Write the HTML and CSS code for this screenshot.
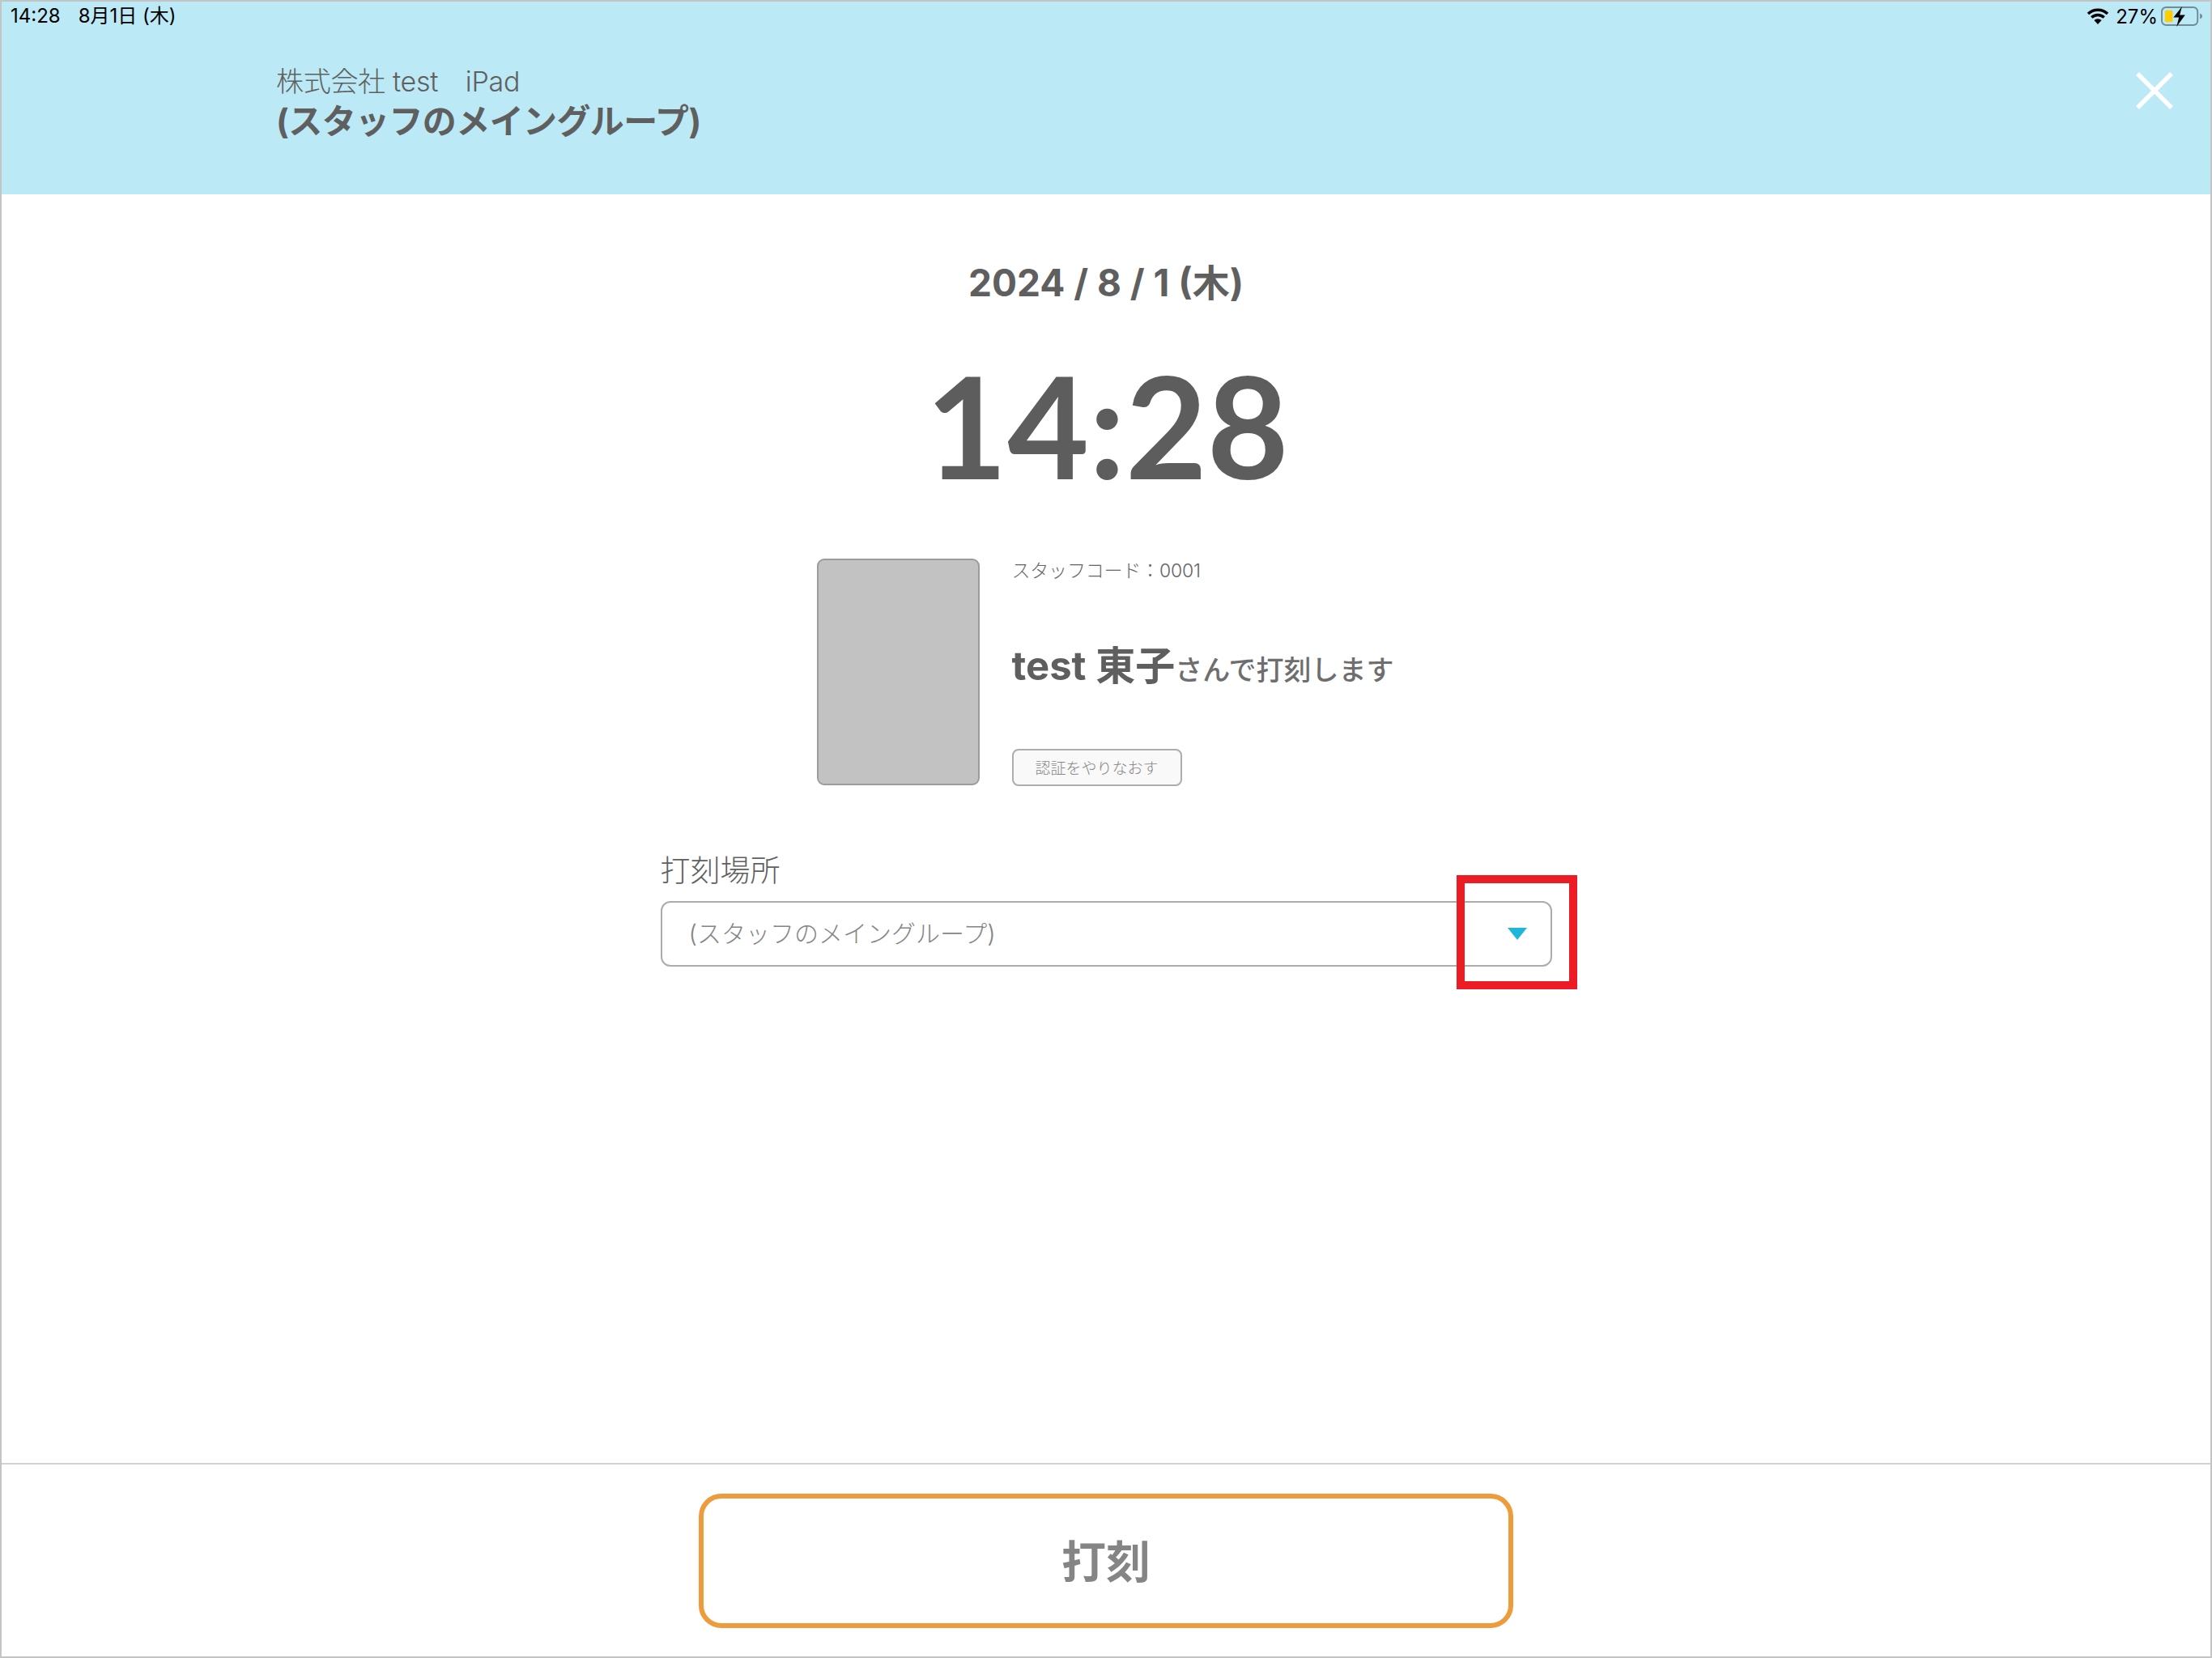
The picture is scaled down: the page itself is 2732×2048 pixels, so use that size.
FILE: index.html
```html
<!DOCTYPE html>
<html lang="ja">
<head>
<meta charset="utf-8">
<title>打刻</title>
<link rel="stylesheet" href="styles.css">
</head>
<body>
<div class="frame">
  <header class="header">
    <div class="status">
      <div class="status-left"><span>14:28</span><span>8月1日 (木)</span></div>
      <div class="status-right">
        <svg class="wifi" viewBox="0 0 28 20"><path d="M14 20l-4.600-5a6.600 6.600 0 0 1 9.200 0z"/><path d="M7.500 12.800l-2.400-2.500a13 13 0 0 1 17.800 0l-2.400 2.500a9.600 9.600 0 0 0-13 0z"/><path d="M3.200 8.300L.8 5.800a19.200 19.200 0 0 1 26.400 0l-2.400 2.500a15.800 15.800 0 0 0-21.600 0z"/></svg>
        <span class="pct">27%</span>
        <svg class="battery" viewBox="0 0 54 26"><rect x="1" y="1" width="46" height="23" rx="5.500" fill="none" stroke="#6f8c98" stroke-width="2"/><rect x="5" y="5" width="10" height="15" rx="2" fill="#fc0"/><path d="M50 9c2 .5 3 2 3 3.500s-1 3-3 3.500z" fill="#6f8c98"/><path d="M27 0L16 14h7l-3 12 11-15h-7z" fill="#000"/></svg>
      </div>
    </div>
    <div class="header-body">
      <div class="company">株式会社 test　iPad</div>
      <div class="group">(スタッフのメイングループ)</div>
    </div>
    <svg class="close" viewBox="0 0 46 46"><path d="M2 2l42 42M44 2L2 44" stroke="#fff" stroke-width="5.500" fill="none"/></svg>
  </header>
  <main class="main">
    <div class="date">2024 / 8 / 1 (木)</div>
    <div class="time">14:28</div>
    <section class="staff">
      <div class="photo"></div>
      <div class="staff-info">
        <div class="code">スタッフコード：0001</div>
        <div class="name"><strong>test 東子</strong><span>さんで打刻します</span></div>
        <button class="retry">認証をやりなおす</button>
      </div>
    </section>
    <section class="place">
      <div class="place-label">打刻場所</div>
      <div class="select">
        <span>(スタッフのメイングループ)</span>
        <i class="caret"></i>
        <div class="callout"></div>
      </div>
    </section>
  </main>
  <footer class="footer">
    <button class="stamp">打刻</button>
  </footer>
</div>
</body>
</html>
```

FILE: styles.css
```css
* { box-sizing: border-box; }
html, body { margin: 0; padding: 0; background: #fff; }
body { font-family: "Inter", "Noto Sans CJK JP", sans-serif; color: #5f5f5f; }
.frame {
  position: relative;
  width: 2732px;
  height: 2048px;
  border: 2px solid #c4c4c4;
  display: flex;
  flex-direction: column;
}
.header {
  position: relative;
  height: 238px;
  flex: none;
  background: #bbe9f5;
}
.status {
  height: 36px;
  padding: 0 9px 0 11px;
  display: flex;
  justify-content: space-between;
  align-items: center;
  color: #000;
  font-size: 24px;
}
.status-left { display: flex; align-items: baseline; gap: 22px; line-height: 36px; }
.status-right { display: flex; align-items: center; }
.wifi { width: 28px; height: 20px; margin-right: 8px; }
.pct { margin-right: 4px; font-size: 24px; }
.battery { width: 52px; height: 25px; }
.header-body { padding: 43px 0 0 339px; }
.company { font-size: 34px; line-height: 40px; font-weight: 300; letter-spacing: -0.3px; color: #606060; }
.group { margin-top: 4px; font-size: 42px; line-height: 50px; font-weight: 700; color: #5f5f5f; letter-spacing: -.6px; }
.close { position: absolute; right: 46px; top: 87px; width: 46px; height: 46px; }
.main {
  flex: 1;
  display: flex;
  flex-direction: column;
  align-items: center;
  padding-top: 79px;
}
.date { font-size: 46px; line-height: 60px; font-weight: 700; color: #5f5f5f; }
.time {
  margin-top: 46px;
  margin-left: 3px;
  font-family: "Lato", sans-serif;
  font-size: 174px;
  line-height: 200px;
  font-weight: 700;
  color: #5d5d5d;
}
.staff { margin-top: 65px; margin-left: -2px; height: 281px; display: flex; gap: 40px; }
.photo {
  width: 201px;
  height: 280px;
  background: #c2c2c2;
  border: 2px solid #9c9c9c;
  border-radius: 9px;
}
.staff-info { display: flex; flex-direction: column; align-items: flex-start; }
.code { height: 29px; padding-top: 1px; font-size: 23px; line-height: 28px; font-weight: 300; color: #666; letter-spacing: -0.2px; }
.name { flex: none; margin-top: 74px; height: 60px; line-height: 60px; white-space: nowrap; }
.name strong { font-size: 49px; font-weight: 700; color: #5f5f5f; }
.name span { font-size: 34px; font-weight: 500; color: #6e6e6e; }
.retry {
  flex: none;
  margin-top: 72px;
  width: 210px;
  height: 46px;
  padding: 0 0 2px;
  background: #f9f9f9;
  border: 2px solid #adadad;
  border-radius: 8px;
  font-family: inherit;
  font-size: 19px;
  font-weight: 300;
  color: #888;
}
.place { margin-top: 77px; width: 1101px; }
.place-label { padding-top: 2px; font-size: 37px; line-height: 52px; font-weight: 300; color: #606060; }
.select {
  position: relative;
  margin-top: 11px;
  height: 81px;
  padding: 0 29px 5px 33px;
  border: 2px solid #acacac;
  border-radius: 12px;
  display: flex;
  align-items: center;
  justify-content: space-between;
  font-size: 30px;
  font-weight: 300;
  color: #858585;
}
.caret {
  width: 0;
  height: 0;
  margin-top: 5px;
  border-left: 12px solid transparent;
  border-right: 12px solid transparent;
  border-top: 15px solid #1fb6d9;
}
.callout {
  position: absolute;
  left: 981px;
  top: -34px;
  width: 149px;
  height: 141px;
  border: 10px solid #ed1c24;
}
.footer {
  height: 239px;
  flex: none;
  border-top: 2px solid #d2d2d2;
  padding-top: 36px;
  display: flex;
  justify-content: center;
}
.stamp {
  width: 1006px;
  height: 166px;
  padding: 0 0 6px;
  background: #fff;
  border: 6px solid #ee9b3c;
  border-radius: 28px;
  font-family: inherit;
  font-size: 55px;
  font-weight: 700;
  color: #858585;
}
```
